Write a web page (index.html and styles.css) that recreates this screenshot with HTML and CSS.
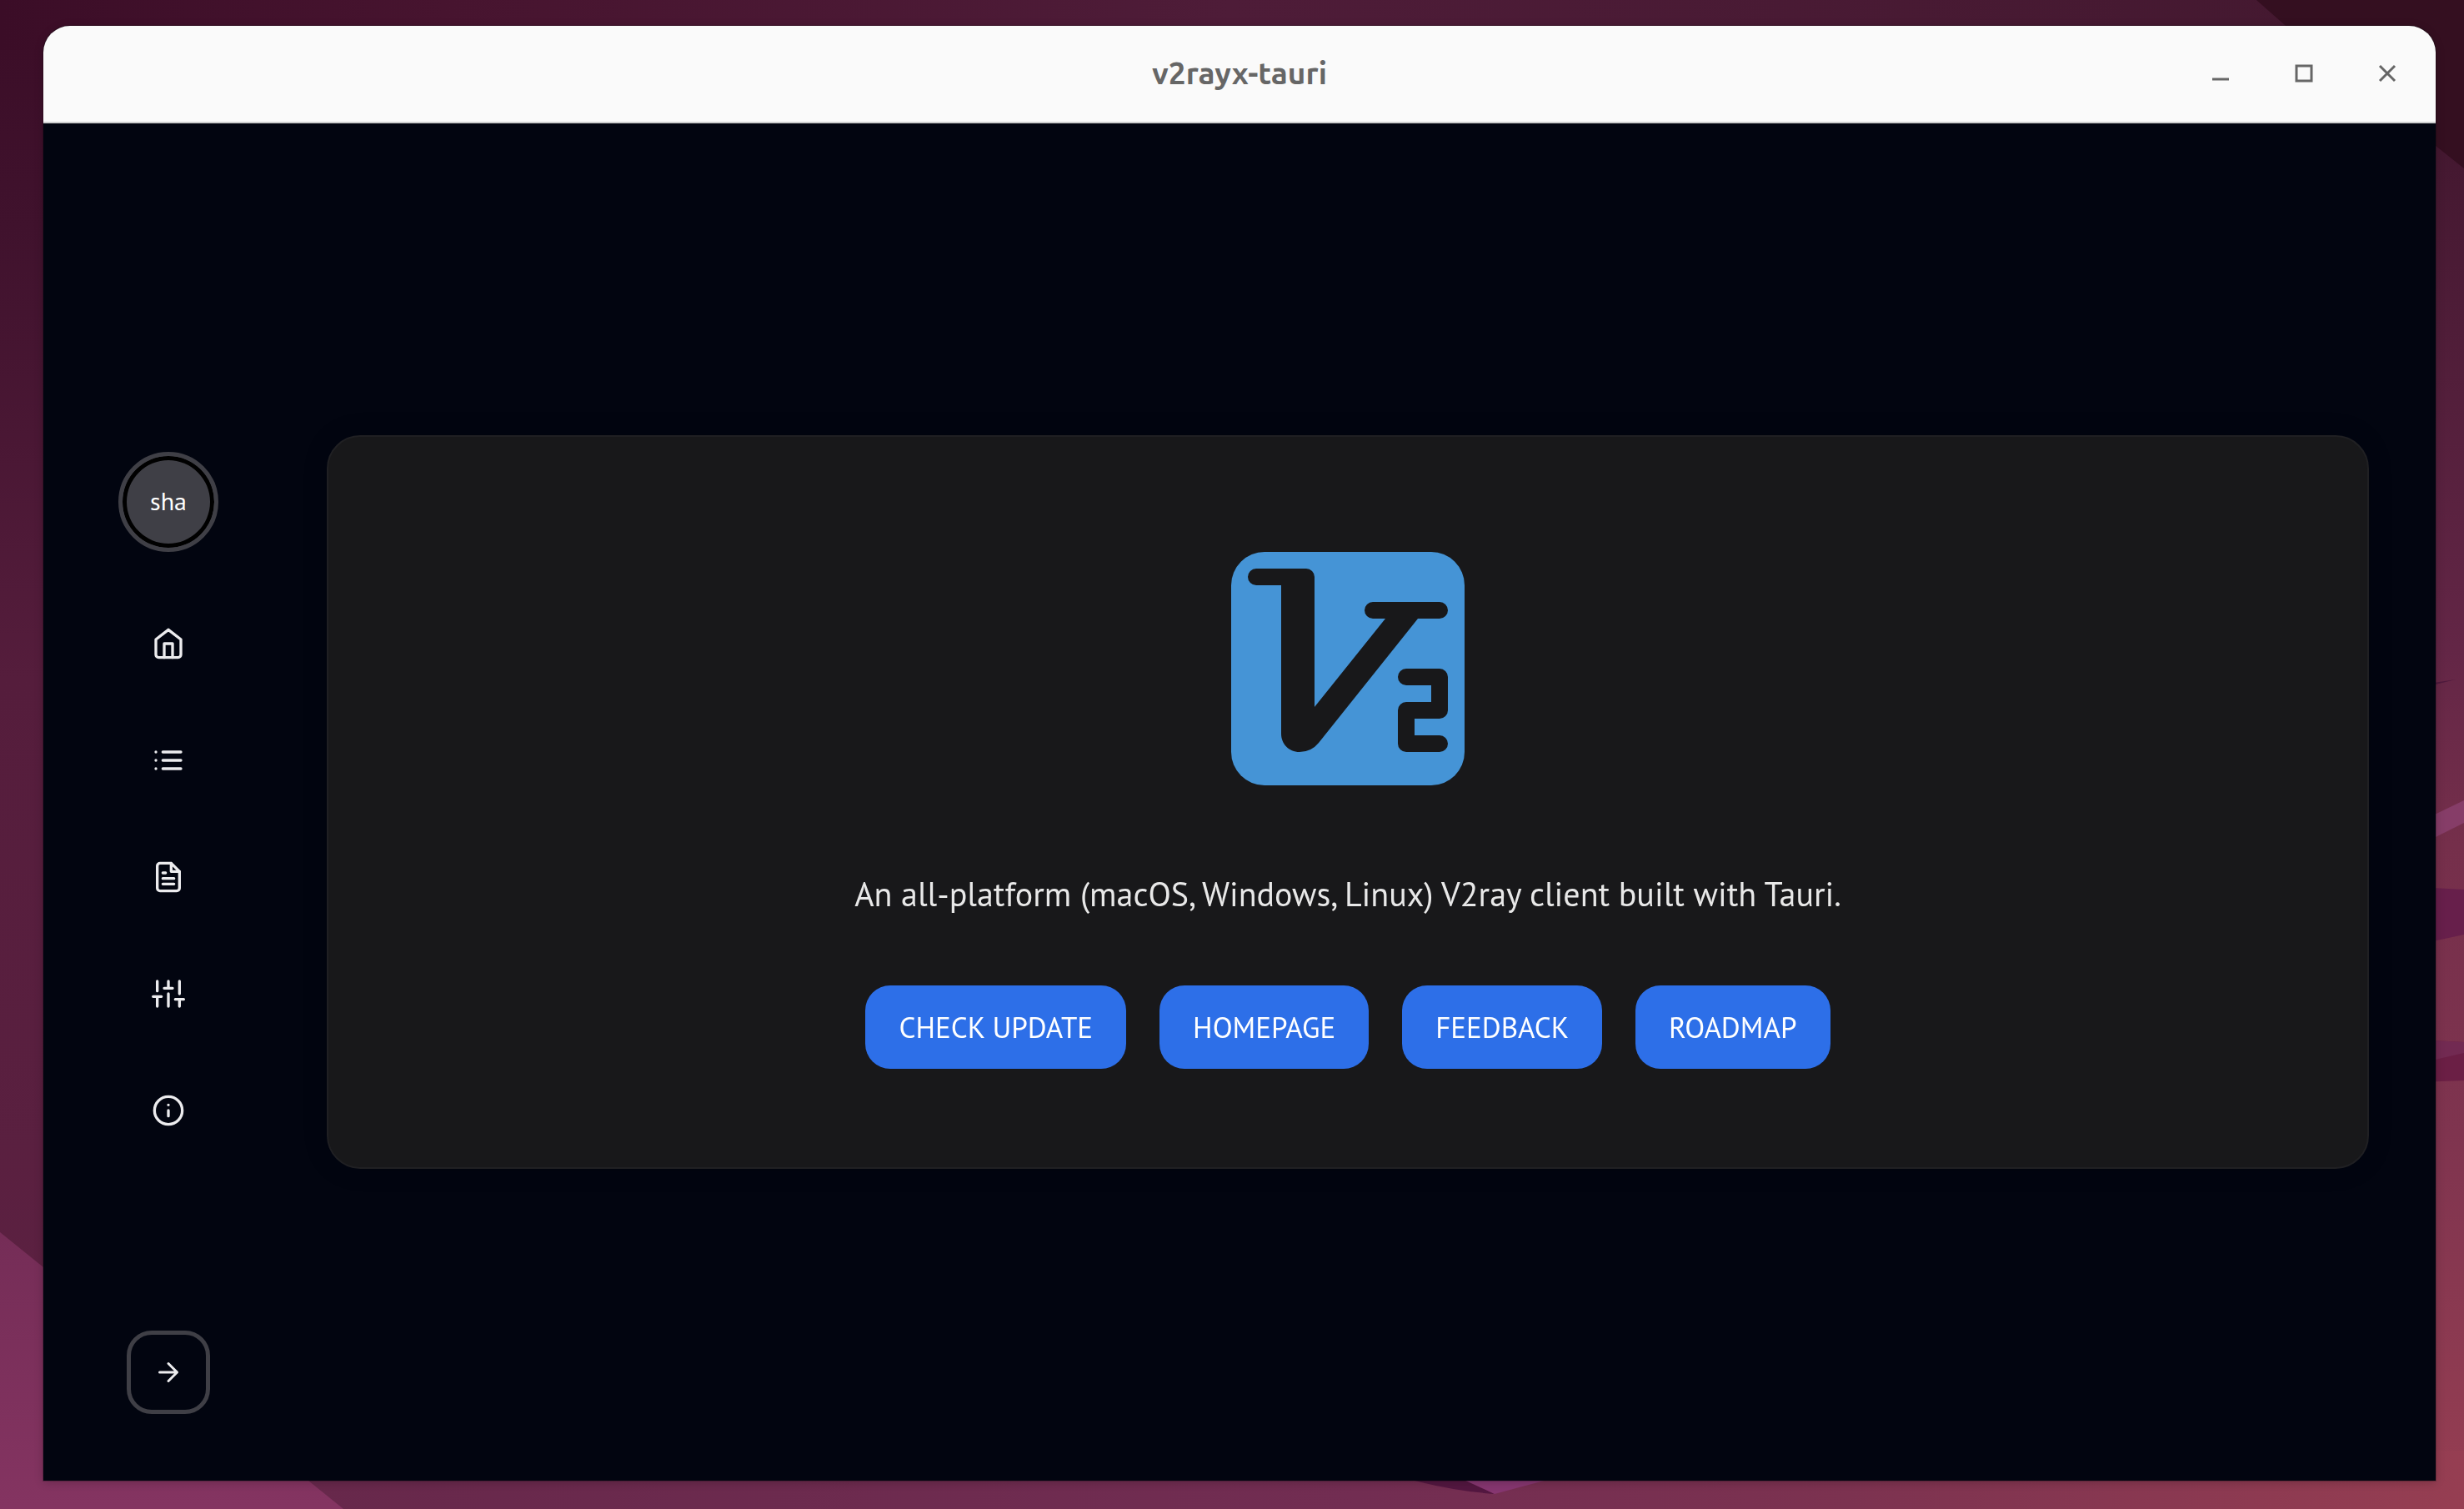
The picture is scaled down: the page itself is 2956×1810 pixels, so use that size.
FILE: index.html
```html
<!DOCTYPE html>
<html lang="en">
<head>
<meta charset="utf-8">
<title>v2rayx-tauri</title>
<link rel="stylesheet" href="styles.css">
</head>
<body>
<svg class="wallpaper" viewBox="0 0 2956 1810" preserveAspectRatio="none" aria-hidden="true">
  <defs>
    <linearGradient id="left" x1="0" y1="0" x2="0" y2="1">
      <stop offset="0" stop-color="#3b0d27"/>
      <stop offset="0.15" stop-color="#40122d"/>
      <stop offset="0.45" stop-color="#551d3c"/>
      <stop offset="1" stop-color="#5e2243"/>
    </linearGradient>
    <linearGradient id="top" x1="0" y1="0" x2="1" y2="0">
      <stop offset="0" stop-color="#3b0d27"/>
      <stop offset="0.18" stop-color="#47142f"/>
      <stop offset="0.5" stop-color="#4e1c38"/>
      <stop offset="1" stop-color="#43182f"/>
    </linearGradient>
    <linearGradient id="right" x1="0" y1="0" x2="0" y2="1">
      <stop offset="0.08" stop-color="#42172f"/>
      <stop offset="0.43" stop-color="#632646"/>
      <stop offset="0.56" stop-color="#752f4b"/>
      <stop offset="0.75" stop-color="#7f344f"/>
      <stop offset="1" stop-color="#963e52"/>
    </linearGradient>
    <linearGradient id="bottom" x1="0" y1="0" x2="1" y2="0">
      <stop offset="0.12" stop-color="#67284b"/>
      <stop offset="0.55" stop-color="#722d52"/>
      <stop offset="0.75" stop-color="#7c3250"/>
      <stop offset="1" stop-color="#963e52"/>
    </linearGradient>
    <linearGradient id="facet" x1="0" y1="0" x2="0" y2="1">
      <stop offset="0" stop-color="#752d57"/>
      <stop offset="1" stop-color="#843461"/>
    </linearGradient>
  </defs>
  <rect width="1400" height="1810" fill="url(#left)"/>
  <rect x="1400" width="1556" height="1810" fill="url(#right)"/>
  <rect width="2956" height="60" fill="url(#top)"/>
  <rect y="1740" width="2956" height="70" fill="url(#bottom)"/>
  <path d="M2707 0H2956V202L2741 30Z" fill="#340f20"/>
  <path d="M0 1478L52 1520L370 1776L412 1810H0Z" fill="url(#facet)"/>
  <path d="M2900 822L2946 815L2922 821Z" fill="#4e1a3d"/>
  <path d="M2900 987L2956 960V987L2900 1015Z" fill="#863d68"/>
  <path d="M2900 1064L2956 1067V1121L2900 1133Z" fill="#671f4b"/>
  <path d="M2900 1247L2956 1250V1296L2900 1298Z" fill="#6b1f45"/>
  <path d="M2900 1247L2956 1250V1263L2900 1276Z" fill="#722a52"/>
  <path d="M1690 1774H1758L1793 1792Q1740 1788 1690 1774Z" fill="#531740"/>
  <path d="M1754 1774H1860L1793 1792Z" fill="#863670"/>
</svg>

<div class="window">
  <header class="titlebar">
    <h1 class="titlebar-title">v2rayx-tauri</h1>
    <div class="titlebar-controls">
      <button class="control" type="button" aria-label="Minimize">
        <svg viewBox="0 0 22 22"><path d="M1 18H21"/></svg>
      </button>
      <button class="control" type="button" aria-label="Maximize">
        <svg viewBox="0 0 22 22"><path d="M2 2H20V20H2Z"/></svg>
      </button>
      <button class="control" type="button" aria-label="Close">
        <svg viewBox="0 0 22 22"><path d="M2 2L20 20M20 2L2 20"/></svg>
      </button>
    </div>
  </header>

  <div class="content">
    <aside class="sidebar">
      <nav class="menu" aria-label="Main">
        <div class="avatar">sha</div>
        <a class="menu-item" href="#home" aria-label="Home">
          <svg class="icon" viewBox="0 0 24 24"><path d="M3 9l9-7 9 7v11a2 2 0 0 1-2 2H5a2 2 0 0 1-2-2z"/><path d="M9 22V12h6v10"/></svg>
        </a>
        <a class="menu-item" href="#servers" aria-label="Servers">
          <svg class="icon" viewBox="0 0 24 24"><path d="M8 6h13M8 12h13M8 18h13M3 6h.01M3 12h.01M3 18h.01"/></svg>
        </a>
        <a class="menu-item" href="#logs" aria-label="Logs">
          <svg class="icon" viewBox="0 0 24 24"><path d="M14 2H6a2 2 0 0 0-2 2v16a2 2 0 0 0 2 2h12a2 2 0 0 0 2-2V8z"/><path d="M14 2v6h6M16 13H8M16 17H8M10 9H8"/></svg>
        </a>
        <a class="menu-item" href="#settings" aria-label="Settings">
          <svg class="icon" viewBox="0 0 24 24"><path d="M4 21v-7M4 10V3M12 21v-9M12 8V3M20 21v-5M20 12V3M1 14h6M9 8h6M17 16h6"/></svg>
        </a>
        <a class="menu-item" href="#about" aria-label="About">
          <svg class="icon" viewBox="0 0 24 24"><circle cx="12" cy="12" r="10"/><path d="M12 16v-4M12 8h.01"/></svg>
        </a>
      </nav>
      <button class="expand" type="button" aria-label="Expand sidebar">
        <svg class="icon icon-small" viewBox="0 0 24 24"><path d="M5 12h14M12 5l7 7-7 7"/></svg>
      </button>
    </aside>

    <main class="page">
      <section class="card">
        <svg class="logo" viewBox="0 0 280 280" role="img" aria-label="V2 logo">
          <rect width="280" height="280" rx="40" fill="#4594d6"/>
          <g fill="#18181a">
            <path d="M30 20H90A10 10 0 0 1 100 30V186L185 80H170A10 10 0 0 1 170 60H250A10 10 0 0 1 250 80H224L105 229Q96 240 82 240C69 240 60 230 60 218V40H30A10 10 0 0 1 30 20Z"/>
            <path d="M210 140H250A10 10 0 0 1 260 150V190A10 10 0 0 1 250 200H220V220H250A10 10 0 0 1 250 240H210A10 10 0 0 1 200 230V190A10 10 0 0 1 210 180H240V160H210A10 10 0 0 1 210 140Z"/>
          </g>
        </svg>
        <p class="tagline">An all-platform (macOS, Windows, Linux) V2ray client built with Tauri.</p>
        <div class="actions">
          <button class="action" type="button">CHECK UPDATE</button>
          <button class="action" type="button">HOMEPAGE</button>
          <button class="action" type="button">FEEDBACK</button>
          <button class="action" type="button">ROADMAP</button>
        </div>
      </section>
    </main>
  </div>
</div>
</body>
</html>
```
FILE: styles.css
```css
* {
  box-sizing: border-box;
}

body {
  margin: 0;
  min-height: 100vh;
  padding: 31px 34px 34px 52px;
  display: flex;
  background: #4e1c38;
  font-family: "PT Sans", "Noto Sans", sans-serif;
}

button {
  margin: 0;
  padding: 0;
  border: 0;
  background: none;
  color: inherit;
  font: inherit;
  cursor: pointer;
}

/* Desktop behind the window */
.wallpaper {
  position: fixed;
  inset: 0;
  z-index: -1;
  width: 100%;
  height: 100%;
}

.window {
  flex: 1;
  display: flex;
  flex-direction: column;
  border-radius: 32px 32px 0 0;
  background: #020510;
  box-shadow: 0 0 0 1px rgba(0, 0, 0, 0.2), 0 2px 12px rgba(0, 0, 0, 0.2);
}

/* Title bar */
.titlebar {
  display: grid;
  grid-template-columns: 1fr auto 1fr;
  align-items: center;
  height: 117px;
  padding-bottom: 2px;
  border-bottom: 2px solid #cfd0d0;
  border-radius: 32px 32px 0 0;
  background: #fafafa;
  color: #666;
}

.titlebar-title {
  grid-column: 2;
  margin: 0;
  font-family: Ubuntu, "Noto Sans", sans-serif;
  font-size: 37px;
  font-weight: 700;
  line-height: 48px;
}

.titlebar-controls {
  display: flex;
  justify-content: flex-end;
  gap: 40px;
  padding-right: 28px;
}

.control {
  display: flex;
  align-items: center;
  justify-content: center;
  width: 60px;
  height: 60px;
}

.control svg {
  width: 22px;
  height: 22px;
  fill: none;
  stroke: #666;
  stroke-width: 3;
}

/* Layout under the title bar */
.content {
  flex: 1;
  display: flex;
}

.sidebar {
  width: 300px;
  padding: 80px 0;
  display: grid;
  grid-template-rows: 1fr auto 1fr;
  justify-items: center;
}

.menu {
  grid-row: 2;
  display: flex;
  flex-direction: column;
  align-items: center;
  gap: 40px;
}

.avatar {
  display: flex;
  align-items: center;
  justify-content: center;
  width: 120px;
  height: 120px;
  margin-bottom: 20px;
  padding-bottom: 2px;
  border: 5px solid #3f3f46;
  border-radius: 50%;
  background: #3f3f46;
  box-shadow: inset 0 0 0 5px #000;
  color: #fff;
  font-size: 30px;
  line-height: 40px;
}

.menu-item {
  display: flex;
  align-items: center;
  justify-content: center;
  width: 100px;
  height: 100px;
  color: #ececee;
}

.icon {
  width: 40px;
  height: 40px;
  fill: none;
  stroke: currentColor;
  stroke-width: 2;
  stroke-linecap: round;
  stroke-linejoin: round;
}

.icon-small {
  width: 36px;
  height: 36px;
}

.expand {
  grid-row: 3;
  align-self: end;
  display: flex;
  align-items: center;
  justify-content: center;
  width: 100px;
  height: 100px;
  border: 5px solid #3f3f46;
  border-radius: 30px;
  color: #ececee;
}

.page {
  flex: 1;
  display: flex;
  flex-direction: column;
  justify-content: center;
  padding: 40px 80px 40px 40px;
}

.card {
  display: flex;
  flex-direction: column;
  align-items: center;
  padding: 138px 40px 118px;
  border: 2px solid #202023;
  border-radius: 40px;
  background: #18181a;
  box-shadow: 0 0 30px rgba(0, 0, 0, 0.15);
}

.logo {
  width: 280px;
  height: 280px;
}

.tagline {
  margin: 100px 0 80px;
  color: #e8e8e8;
  font-size: 40px;
  line-height: 60px;
  text-align: center;
}

.actions {
  display: flex;
  flex-wrap: wrap;
  justify-content: center;
  gap: 40px;
}

.action {
  height: 100px;
  padding: 0 40px;
  border-radius: 30px;
  background: #2d6fe8;
  color: #fff;
  font-size: 35px;
  line-height: 50px;
}
```
